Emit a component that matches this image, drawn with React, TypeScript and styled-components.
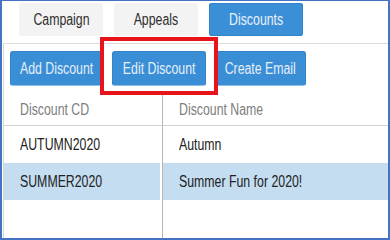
import React from 'react';
import styled, { createGlobalStyle } from 'styled-components';

const GlobalStyle = createGlobalStyle`
  html, body {
    margin: 0;
    padding: 0;
    background: #fff;
  }
  body {
    font-family: 'Liberation Sans', Arial, sans-serif;
  }
`;

const Frame = styled.div`
    position: relative;
    box-sizing: border-box;
    width: 390px;
    height: 240px;
    border: 1px solid #4472c4;
    border-left-width: 2px;
    border-right-width: 2px;
    border-bottom-width: 2px;
    display: flex;
    flex-direction: column;
    overflow: hidden;
  `,
  // the screenshot uses a narrow face; squeeze the regular one to match
  Label = styled.span<{ left?: boolean }>`
    display: inline-block;
    white-space: nowrap;
    transform: scaleX(0.77);
    transform-origin: ${(p) => (p.left ? 'left center' : 'center center')};
  `,
  Tabs = styled.div`
    display: flex;
    gap: 11px;
    padding: 2px 0 0 17px;
    height: 33px;
  `,
  Tab = styled.div<{ active?: boolean }>`
    box-sizing: border-box;
    width: ${(p) => (p.active ? 94 : 84)}px;
    display: flex;
    align-items: center;
    justify-content: center;
    font-size: 16px;
    border-radius: 2px;
    color: ${(p) => (p.active ? '#e9f2fb' : '#2e2e2e')};
    background: ${(p) => (p.active ? '#3b8fd7' : '#f3f3f3')};
    border: 1px solid ${(p) => (p.active ? '#3283cc' : '#f3f3f3')};
  `,
  Panel = styled.div`
    flex: 1;
    margin: 7px 0 0 1px;
    border-top: 1px solid #dcdcdc;
    border-left: 1px solid #d8d8d8;
    display: flex;
    flex-direction: column;
  `,
  Toolbar = styled.div`
    display: flex;
    gap: 8px;
    padding: 7px 0 0 6px;
    height: 36px;
  `,
  Button = styled.div<{ w: number }>`
    box-sizing: border-box;
    width: ${(p) => p.w}px;
    height: 35px;
    display: flex;
    align-items: center;
    justify-content: center;
    font-size: 16px;
    color: #e6eff9;
    background: #3a8ed6;
    border: 1px solid #3383cb;
    border-bottom-color: #8cbfe8;
    border-radius: 3px;
  `,
  Table = styled.div`
    flex: 1;
    margin-top: 7px;
    display: grid;
    grid-template-columns: 159px 1fr;
    grid-auto-rows: min-content;
    position: relative;
  `,
  ColumnLine = styled.div`
    position: absolute;
    left: 158px;
    top: 0;
    bottom: 0;
    width: 1px;
    background: #b7b7b7;
  `,
  Cell = styled.div<{ head?: boolean; selected?: boolean; first?: boolean }>`
    box-sizing: border-box;
    height: ${(p) => (p.head ? 32 : 37)}px;
    display: flex;
    align-items: center;
    padding-left: 16px;
    font-size: 16px;
    color: ${(p) => (p.head ? '#7d7d7d' : '#222')};
    background: ${(p) => (p.selected ? '#c4ddf1' : 'transparent')};
    border-bottom: ${(p) => (p.head ? '1px solid #d2d2d2' : 'none')};
    box-shadow: ${(p) => (p.selected && p.first ? 'inset -3px 0 0 #fff' : 'none')};
  `,
  Highlight = styled.div`
    position: absolute;
    left: 98px;
    top: 36px;
    width: 118px;
    height: 58px;
    box-sizing: border-box;
    border: 4px solid #e8141c;
    pointer-events: none;
  `;

const rows = [
  { code: 'AUTUMN2020', name: 'Autumn', selected: false },
  { code: 'SUMMER2020', name: 'Summer Fun for 2020!', selected: true },
];

const App = () => (
  <>
    <GlobalStyle />
    <Frame>
      <Tabs>
        <Tab><Label>Campaign</Label></Tab>
        <Tab><Label>Appeals</Label></Tab>
        <Tab active><Label>Discounts</Label></Tab>
      </Tabs>
      <Panel>
        <Toolbar>
          <Button w={94}><Label>Add Discount</Label></Button>
          <Button w={94}><Label>Edit Discount</Label></Button>
          <Button w={92}><Label>Create Email</Label></Button>
        </Toolbar>
        <Table>
          <ColumnLine />
          <Cell head first><Label left>Discount CD</Label></Cell>
          <Cell head><Label left>Discount Name</Label></Cell>
          {rows.map((r) => (
            <React.Fragment key={r.code}>
              <Cell first selected={r.selected}><Label left>{r.code}</Label></Cell>
              <Cell selected={r.selected}><Label left>{r.name}</Label></Cell>
            </React.Fragment>
          ))}
        </Table>
      </Panel>
      <Highlight />
    </Frame>
  </>
);

export default App;
